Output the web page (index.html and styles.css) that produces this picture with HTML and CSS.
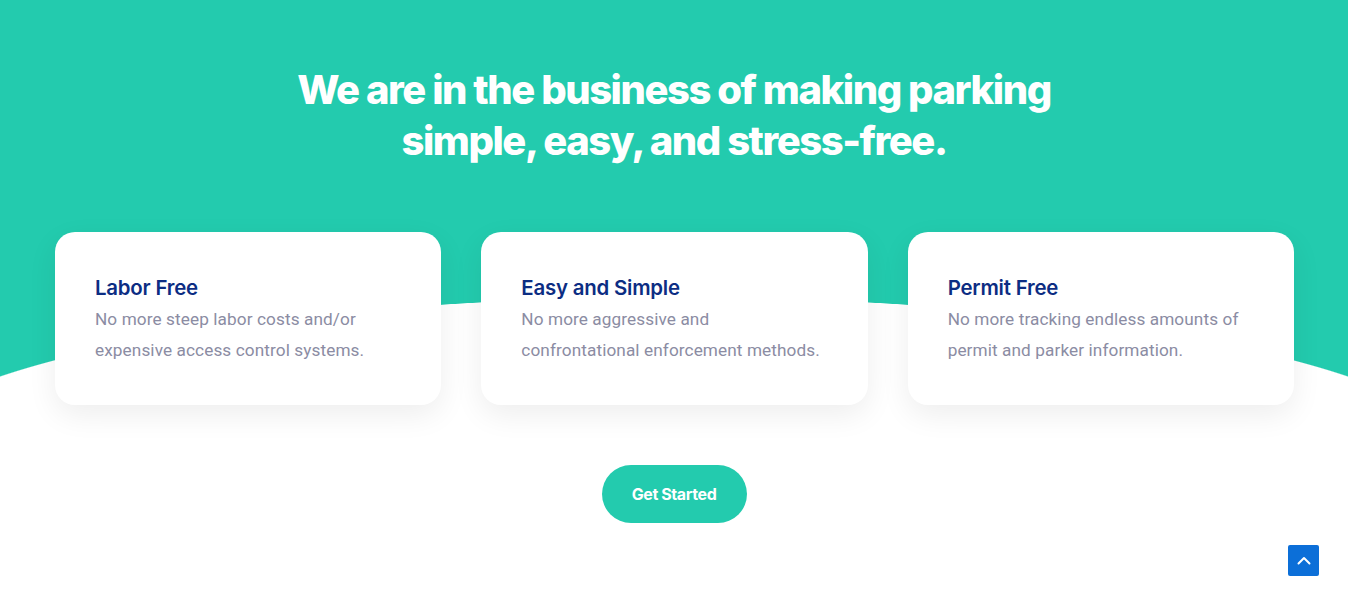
FILE: index.html
```html
<!DOCTYPE html>
<html lang="en">
<head>
<meta charset="utf-8">
<title>Parking</title>
<link rel="stylesheet" href="styles.css">
</head>
<body>
<section class="hero">
  <h1 class="hero-title">We are in the business of making parking<br>simple, easy, and stress-free.</h1>
  <div class="cards">
    <div class="card">
      <h3 class="card-title">Labor Free</h3>
      <p class="card-text">No more steep labor costs and/or expensive access control systems.</p>
    </div>
    <div class="card">
      <h3 class="card-title">Easy and Simple</h3>
      <p class="card-text">No more aggressive and confrontational enforcement methods.</p>
    </div>
    <div class="card">
      <h3 class="card-title">Permit Free</h3>
      <p class="card-text">No more tracking endless amounts of permit and parker information.</p>
    </div>
  </div>
  <div class="cta">
    <a class="btn" href="#">Get Started</a>
  </div>
</section>
<a class="to-top" href="#" aria-label="Back to top">
  <svg width="14" height="9" viewBox="0 0 14 9"><path d="M1.5 7.5 L7 2 L12.5 7.5" fill="none" stroke="#fff" stroke-width="2" stroke-linecap="round" stroke-linejoin="round"/></svg>
</a>
</body>
</html>
```
FILE: styles.css
```css
html, body {
  margin: 0;
  padding: 0;
}
body {
  font-family: Inter, "Noto Sans", sans-serif;
  background: #fff;
  overflow: hidden;
  height: 600px;
}
.hero {
  height: 600px;
  background:
    radial-gradient(ellipse 800px 171px at 674px 468px, #fff 99.6%, rgba(255,255,255,0) 100%) 0 0 / 100% 468px no-repeat,
    linear-gradient(#23cbae, #23cbae) 0 0 / 100% 468px no-repeat,
    #fff;
  padding-top: 64px;
  box-sizing: border-box;
}
.hero-title {
  margin: 0 auto;
  text-align: center;
  color: #fff;
  font-family: Inter, sans-serif;
  font-weight: 800;
  font-size: 40px;
  line-height: 51px;
  letter-spacing: -1.45px;
}
.cards {
  display: flex;
  gap: 40px;
  width: 1239px;
  margin: 66px 0 0 55px;
}
.card {
  flex: 1;
  background: #fff;
  border-radius: 20px;
  box-shadow: 0 10px 30px rgba(0, 0, 0, 0.07);
  padding: 42px 40px 39px;
  height: 173px;
  box-sizing: border-box;
}
.card-title {
  margin: 0;
  font-family: Inter, sans-serif;
  font-size: 20.4px;
  line-height: 28px;
  font-weight: 600;
  color: #0c2d83;
  letter-spacing: -0.2px;
}
.card-text {
  margin: 2px 0 0;
  font-family: Roboto, sans-serif;
  font-size: 17.2px;
  line-height: 31px;
  color: #8b8ca3;
  letter-spacing: 0.1px;
}
.cta {
  display: flex;
  justify-content: center;
  margin-top: 60px;
}
.btn {
  display: flex;
  align-items: center;
  justify-content: center;
  width: 145px;
  height: 58px;
  border-radius: 29px;
  background: #23cbae;
  color: #fff;
  text-decoration: none;
  font-family: Inter, sans-serif;
  font-weight: 700;
  font-size: 16px;
  letter-spacing: -0.4px;
}
.to-top {
  position: fixed;
  left: 1288px;
  top: 545px;
  width: 31px;
  height: 31px;
  background: #0c6fd8;
  border-radius: 2px;
  display: flex;
  align-items: center;
  justify-content: center;
}
```
